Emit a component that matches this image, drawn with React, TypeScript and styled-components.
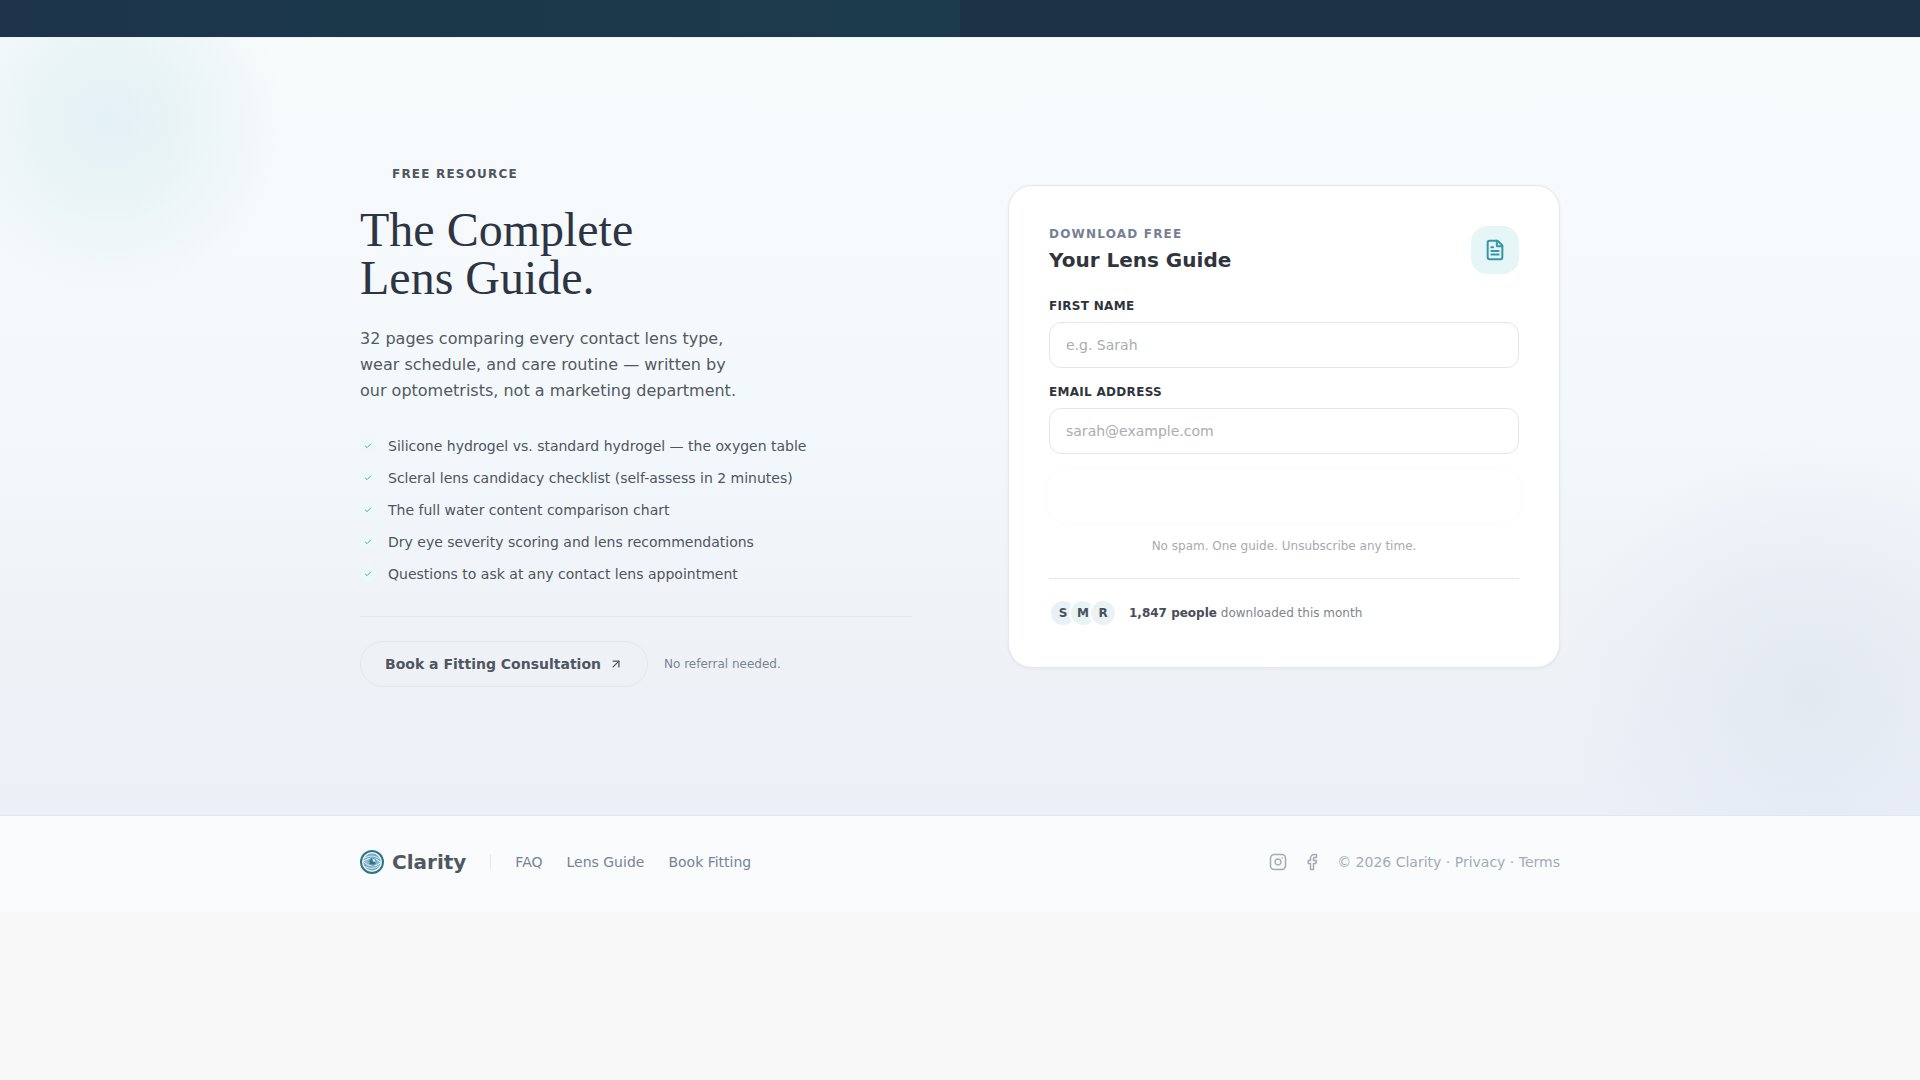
import React from 'react';
import styled, { createGlobalStyle } from 'styled-components';
import { ArrowUpRight, Check, Facebook, FileText, Instagram } from 'lucide-react';

const sans = '"DejaVu Sans", Verdana, sans-serif';

const GlobalStyle = createGlobalStyle`
  *, *::before, *::after { box-sizing: border-box; }
  body { margin: 0; background: #f8f8f8; font-family: ${sans}; color: #4f555c; }
  h1, h2, p, ul { margin: 0; padding: 0; }
  a { color: inherit; text-decoration: none; }
`;

const Banner = styled.div`
  height: 37px;
  background:
    linear-gradient(90deg, #1d344b 0%, #1b384b 20%, #1b3a4b 50%, transparent 50%),
    #1d3147;
`;

const GuideSection = styled.section`
  position: relative;
  overflow: hidden;
  padding: 128px 24px;
  border-top: 1px solid #eaf1f8;
  background: linear-gradient(180deg, #f8fbfc 0%, #f3f8fc 50%, #eef2f7 80%, #ebf0f8 100%);
`;

const Glow = styled.div<{ $corner: 'start' | 'end' }>`
  position: absolute;
  border-radius: 50%;
  ${({ $corner }) =>
    $corner === 'start'
      ? `left: -70px; top: -100px; width: 360px; height: 360px;
         background: radial-gradient(circle, rgba(200, 226, 240, 0.4) 0%, rgba(208, 232, 234, 0.38) 25%, rgba(220, 238, 240, 0) 70%);`
      : `right: -140px; bottom: -125px; width: 500px; height: 500px;
         background: radial-gradient(circle, rgba(212, 221, 232, 0.4) 0%, rgba(220, 227, 240, 0.3) 38%, rgba(230, 236, 246, 0) 70%);`}
`;

const Columns = styled.div`
  position: relative;
  max-width: 1200px;
  margin: 0 auto;
  display: grid;
  grid-template-columns: 1fr 1fr;
  gap: 96px;
  align-items: center;
`;

const Eyebrow = styled.p<{ $indent?: boolean; $muted?: boolean }>`
  padding-left: ${({ $indent }) => ($indent ? '32px' : '0')};
  font-size: 12px;
  line-height: 16px;
  font-weight: 700;
  letter-spacing: 0.1em;
  text-transform: uppercase;
  color: ${({ $muted }) => ($muted ? '#758095' : '#4f565e')};
`;

const Title = styled.h1`
  margin: 24px 0;
  font-family: "Liberation Serif", "Times New Roman", serif;
  font-size: 48px;
  line-height: 48px;
  font-weight: 400;
  color: #2d3545;
`;

const Lead = styled.p`
  max-width: 380px;
  font-size: 16px;
  line-height: 26px;
  color: #535960;
`;

const TopicList = styled.ul`
  list-style: none;
  display: grid;
  gap: 12px;
  margin: 32px 0;
  font-size: 14px;
  line-height: 20px;
`;

const Topic = styled.li`
  display: flex;
  align-items: center;
  gap: 12px;
`;

const Tick = styled.span`
  display: grid;
  place-items: center;
  width: 16px;
  height: 16px;
  border-radius: 50%;
  background: #eef8fa;
  color: #42b395;
`;

const Actions = styled.div`
  display: flex;
  align-items: center;
  gap: 16px;
  padding-top: 24px;
  border-top: 1px solid #e2e7ea;
  font-size: 12px;
  color: #7b858f;
`;

const BookLink = styled.a`
  display: flex;
  align-items: center;
  gap: 8px;
  padding: 12px 24px;
  border: 1px solid #e4e8ec;
  border-radius: 24px;
  font-size: 14px;
  line-height: 20px;
  font-weight: 700;
  color: #4f565f;
`;

const Card = styled.form`
  padding: 40px;
  background: #fff;
  border: 1px solid #e4e9eb;
  border-radius: 24px;
  box-shadow: 0 1px 3px rgba(30, 50, 70, 0.06);
`;

const CardHeader = styled.header`
  display: flex;
  justify-content: space-between;
  align-items: center;
  margin-bottom: 24px;
`;

const CardTitle = styled.h2`
  margin-top: 4px;
  font-size: 20px;
  line-height: 28px;
  font-weight: 700;
  color: #2f343d;
`;

const FileBadge = styled.span`
  display: grid;
  place-items: center;
  width: 48px;
  height: 48px;
  border-radius: 16px;
  background: #e6f6f6;
  color: #3797a9;
`;

const Field = styled.label`
  display: grid;
  gap: 8px;
  margin-bottom: 16px;
  font-size: 12px;
  line-height: 16px;
  font-weight: 700;
  color: #2f333d;
`;

const FieldName = styled.span`
  letter-spacing: 0.025em;
  text-transform: uppercase;
`;

const TextInput = styled.input`
  width: 100%;
  height: 46px;
  padding: 0 16px;
  border: 1px solid #e2e7e9;
  border-radius: 12px;
  background: #fff;
  font-family: ${sans};
  font-size: 14px;
  color: #2f333d;
  &::placeholder { color: #a8adb2; opacity: 1; }
`;

const SubmitButton = styled.button`
  display: block;
  width: 100%;
  height: 52px;
  border: 0;
  border-radius: 16px;
  background: #fff;
  box-shadow: 0 0 10px rgba(30, 80, 90, 0.03);
`;

const FinePrint = styled.p`
  margin: 16px 0 24px;
  font-size: 12px;
  line-height: 16px;
  text-align: center;
  color: #a6abb0;
`;

const Proof = styled.div`
  display: flex;
  align-items: center;
  gap: 12px;
  padding-top: 20px;
  border-top: 1px solid #e0e5e8;
  font-size: 12px;
  color: #7d848b;
  strong { color: #474d57; }
`;

const Avatars = styled.div`
  display: flex;
`;

const Avatar = styled.span<{ $tint: string }>`
  display: grid;
  place-items: center;
  width: 28px;
  height: 28px;
  border: 2px solid #fff;
  border-radius: 50%;
  background: ${({ $tint }) => $tint};
  font-weight: 700;
  color: #48525d;
  & + & { margin-left: -8px; }
`;

const Footer = styled.footer`
  padding: 32px 24px 36px;
  border-top: 1px solid #e2e7eb;
  background: #f9fbfc;
`;

const FooterRow = styled.div`
  max-width: 1200px;
  margin: 0 auto;
  display: flex;
  justify-content: space-between;
  align-items: center;
  font-size: 14px;
  line-height: 28px;
`;

const FooterGroup = styled.div<{ $gap: number; $color: string }>`
  display: flex;
  align-items: center;
  gap: ${({ $gap }) => $gap}px;
  color: ${({ $color }) => $color};
  svg { display: block; }
`;

const Brand = styled.a`
  display: flex;
  align-items: center;
  gap: 8px;
  font-size: 20px;
  font-weight: 700;
  color: #4f5762;
`;

const Rule = styled.span`
  width: 1px;
  height: 16px;
  background: #e2e7eb;
`;

const Logo = () => (
  <svg width="24" height="24" viewBox="0 0 24 24" fill="none" aria-hidden="true">
    <circle cx="12" cy="12" r="11" fill="#e6f4f8" stroke="#2f7682" strokeWidth="2" />
    <circle cx="12" cy="12" r="8.5" fill="#74a8c6" />
    <path d="M5 8C8.500 5.500 15 5.200 19 8.500" stroke="#d9edf5" strokeWidth="1" />
    <path d="M3.500 11.500C7 7.500 16 6.500 20.500 12.500C17 17 8 17.500 3.500 11.500Z" fill="#8fbdd6" stroke="#e6f4f8" strokeWidth="1" />
    <path d="M5.500 16.500C9 19 15 19 18.500 16" stroke="#d9edf5" strokeWidth="1" />
    <circle cx="12.500" cy="11.800" r="3.600" fill="#d9edf5" stroke="#5b97b4" strokeWidth="1" />
    <path d="M12.500 8.800A3 3 0 1 0 15.500 12L12.800 11.500Z" fill="#2f7682" />
  </svg>
);

const topics = [
  'Silicone hydrogel vs. standard hydrogel — the oxygen table',
  'Scleral lens candidacy checklist (self-assess in 2 minutes)',
  'The full water content comparison chart',
  'Dry eye severity scoring and lens recommendations',
  'Questions to ask at any contact lens appointment',
];

const readers = [
  { initial: 'S', tint: '#e9f1f8' },
  { initial: 'M', tint: '#e7f4f4' },
  { initial: 'R', tint: '#ebf1f4' },
];

export default function App() {
  return (
    <>
      <GlobalStyle />
      <Banner />
      <GuideSection>
        <Glow $corner="start" />
        <Glow $corner="end" />
        <Columns>
          <div>
            <Eyebrow $indent>Free Resource</Eyebrow>
            <Title>The Complete<br />Lens Guide.</Title>
            <Lead>
              32 pages comparing every contact lens type, wear schedule, and care routine — written by
              our optometrists, not a marketing department.
            </Lead>
            <TopicList>
              {topics.map((topic) => (
                <Topic key={topic}>
                  <Tick><Check size={8} strokeWidth={3} /></Tick>
                  {topic}
                </Topic>
              ))}
            </TopicList>
            <Actions>
              <BookLink href="#book">
                Book a Fitting Consultation
                <ArrowUpRight size={14} strokeWidth={2.2} />
              </BookLink>
              <span>No referral needed.</span>
            </Actions>
          </div>
          <Card>
            <CardHeader>
              <div>
                <Eyebrow $muted>Download Free</Eyebrow>
                <CardTitle>Your Lens Guide</CardTitle>
              </div>
              <FileBadge><FileText size={22} strokeWidth={2.2} /></FileBadge>
            </CardHeader>
            <Field>
              <FieldName>First name</FieldName>
              <TextInput type="text" placeholder="e.g. Sarah" />
            </Field>
            <Field>
              <FieldName>Email address</FieldName>
              <TextInput type="email" placeholder="sarah@example.com" />
            </Field>
            <SubmitButton type="button" aria-label="Download the guide" />
            <FinePrint>No spam. One guide. Unsubscribe any time.</FinePrint>
            <Proof>
              <Avatars>
                {readers.map(({ initial, tint }) => (
                  <Avatar key={initial} $tint={tint}>{initial}</Avatar>
                ))}
              </Avatars>
              <span><strong>1,847 people</strong> downloaded this month</span>
            </Proof>
          </Card>
        </Columns>
      </GuideSection>
      <Footer>
        <FooterRow>
          <FooterGroup $gap={24} $color="#77839a">
            <Brand href="#top"><Logo />Clarity</Brand>
            <Rule />
            <a href="#faq">FAQ</a>
            <a href="#guide">Lens Guide</a>
            <a href="#book">Book Fitting</a>
          </FooterGroup>
          <FooterGroup $gap={16} $color="#a2abb8">
            <a href="#instagram" aria-label="Instagram"><Instagram size={18} strokeWidth={2} /></a>
            <a href="#facebook" aria-label="Facebook"><Facebook size={18} strokeWidth={2} /></a>
            <span>© 2026 Clarity · <a href="#privacy">Privacy</a> · <a href="#terms">Terms</a></span>
          </FooterGroup>
        </FooterRow>
      </Footer>
    </>
  );
}
